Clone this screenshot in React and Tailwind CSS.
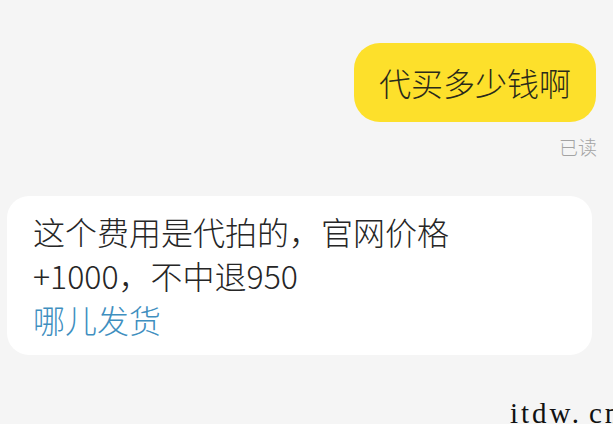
import React from 'react';

const FONT = '"Noto Sans CJK SC", "Noto Sans", sans-serif';

const App = () => {
  return (
    <div
      className="relative w-[613px] h-[424px] overflow-hidden bg-[#f5f5f5] flex flex-col"
      style={{ fontFamily: FONT }}
    >
      {/* outgoing message */}
      <div className="flex justify-end pr-[17px] pt-[43px]">
        <div className="rounded-[26px] bg-[#fde02b] px-[25px] py-[18px] text-[32px] leading-[43px] font-light text-[#2a2a1a]">
          代买多少钱啊
        </div>
      </div>
      <div className="flex justify-end pr-[16px] mt-[13px] text-[19px] leading-[24px] font-light text-[#a3a3a3]">
        已读
      </div>

      {/* incoming message */}
      <div className="ml-[7px] mr-[21px] mt-[37px] rounded-[22px] bg-white pl-[26px] pr-4 pt-[13px] pb-[14px] text-[32px] leading-[44px] font-light text-[#262626]">
        <div>这个费用是代拍的，官网价格</div>
        <div>+1000，不中退950</div>
        <div className="text-[#3f8fbf]">哪儿发货</div>
      </div>

      {/* watermark */}
      <div
        className="absolute left-[510px] top-[398px] whitespace-nowrap text-[29px] leading-[30px] tracking-[3px] text-[#111]"
        style={{ fontFamily: '"Liberation Serif", serif' }}
      >
        itdw.<span className="ml-[7px]">cn</span>
      </div>
    </div>
  );
};

export default App;
